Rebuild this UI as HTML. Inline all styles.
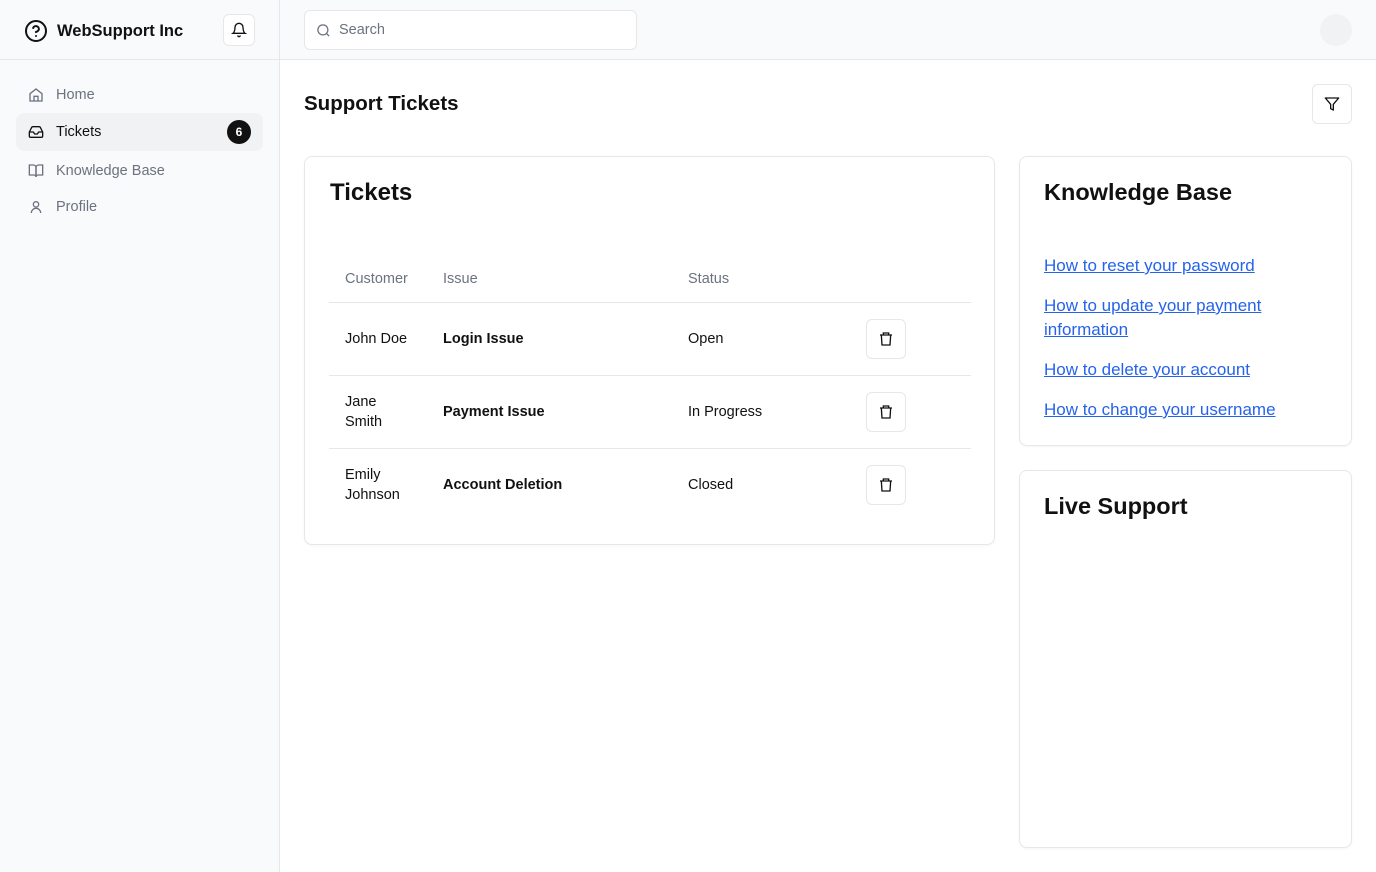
<!DOCTYPE html>
<html><head><style>
*{box-sizing:border-box;margin:0;padding:0}
body{width:1376px;height:872px;font-family:"Liberation Sans",sans-serif;background:#fff;color:#111;position:relative;overflow:hidden}
.side{position:absolute;left:0;top:0;width:280px;height:872px;background:#f9fafb;border-right:1px solid #e5e7eb}
.top{position:absolute;left:280px;top:0;right:0;height:60px;background:#f9fafb;border-bottom:1px solid #e5e7eb}
.sh{height:60px;border-bottom:1px solid #e5e7eb;position:relative}
.logo{position:absolute;left:24px;top:19px;display:flex;align-items:center;gap:9px;font-weight:bold;font-size:16.5px}
.bell{position:absolute;left:223px;top:14px;width:32px;height:32px;border:1px solid #e5e7eb;border-radius:6px;background:#fff;display:flex;align-items:center;justify-content:center}
.nav{position:absolute;left:16px;width:247px;height:38px;display:flex;align-items:center;padding-left:12px;gap:12px;font-size:14.5px;color:#6b7280;border-radius:8px}
.nav.act{background:#f1f2f4;color:#111}
.badge{position:absolute;right:12px;top:7px;width:24px;height:24px;border-radius:50%;background:#111;color:#fff;font-size:12px;font-weight:bold;display:flex;align-items:center;justify-content:center}
.search{position:absolute;left:24px;top:10px;width:333px;height:40px;border:1px solid #e5e7eb;border-radius:6px;background:#fff;display:flex;align-items:center;padding-left:11px;gap:8px;color:#6b7280;font-size:14.5px}
.avatar{position:absolute;right:24px;top:14px;width:32px;height:32px;border-radius:50%;background:#f1f2f4}
.card{position:absolute;border:1px solid #e5e7eb;border-radius:8px;background:#fff;box-shadow:0 1px 2px rgba(0,0,0,.04)}
h2{font-size:24px;font-weight:bold;position:absolute;left:25px;top:22px}
table{position:absolute;left:24px;top:100px;width:642px;border-collapse:collapse;font-size:14.5px}
th{text-align:left;font-weight:normal;color:#6b7280;height:45px;padding-left:16px;border-bottom:1px solid #e5e7eb}
td{height:73px;padding-left:16px;border-bottom:1px solid #e5e7eb;line-height:20px}
tr:last-child td{border-bottom:none}
.tb{width:40px;height:40px;border:1px solid #e5e7eb;border-radius:6px;display:flex;align-items:center;justify-content:center}
a{color:#2563eb;text-decoration:underline;font-size:17px;position:absolute;left:24px;line-height:24px}
</style></head><body>
<div class="side">
<div class="sh">
<div class="logo"><svg width="24" height="24" viewBox="0 0 24 24" fill="none" stroke="#111" stroke-width="2" stroke-linecap="round"><circle cx="12" cy="12" r="10"/><path d="M9.1 9a3 3 0 0 1 5.8 1c0 2-3 3-3 3"/><path d="M12 17h.01"/></svg>WebSupport Inc</div>
<div class="bell"><svg width="16" height="16" viewBox="0 0 24 24" fill="none" stroke="#111" stroke-width="2" stroke-linecap="round"><path d="M6 8a6 6 0 0 1 12 0c0 7 3 9 3 9H3s3-2 3-9"/><path d="M10.3 21a1.94 1.94 0 0 0 3.4 0"/></svg></div>
</div>
<div class="nav" style="top:76px"><svg width="16" height="16" viewBox="0 0 24 24" fill="none" stroke="#6b7280" stroke-width="2"><path d="M3 10l9-7 9 7v11H3z"/><path d="M9 21v-7h6v7"/></svg>Home</div>
<div class="nav act" style="top:113px"><svg width="16" height="16" viewBox="0 0 24 24" fill="none" stroke="#111" stroke-width="2"><path d="M22 12h-6l-2 3h-4l-2-3H2"/><path d="M5.5 5.1L2 12v6a2 2 0 0 0 2 2h16a2 2 0 0 0 2-2v-6l-3.5-6.9A2 2 0 0 0 16.8 4H7.2a2 2 0 0 0-1.7 1.1z"/></svg>Tickets<div class="badge">6</div></div>
<div class="nav" style="top:152px"><svg width="16" height="16" viewBox="0 0 24 24" fill="none" stroke="#6b7280" stroke-width="2"><path d="M2 3h6a4 4 0 0 1 4 4v14a3 3 0 0 0-3-3H2z"/><path d="M22 3h-6a4 4 0 0 0-4 4v14a3 3 0 0 1 3-3h7z"/></svg>Knowledge Base</div>
<div class="nav" style="top:188px"><svg width="16" height="16" viewBox="0 0 24 24" fill="none" stroke="#6b7280" stroke-width="2"><circle cx="12" cy="8" r="4"/><path d="M5 21a7 7 0 0 1 14 0"/></svg>Profile</div>
</div>
<div class="top">
<div class="search"><svg width="15" height="15" viewBox="0 0 24 24" fill="none" stroke="#6b7280" stroke-width="2"><circle cx="11" cy="11" r="8"/><path d="M21 21l-4.3-4.3"/></svg>Search</div>
<div class="avatar"></div>
</div>
<div style="position:absolute;left:304px;top:92px;font-size:20.5px;font-weight:bold">Support Tickets</div>
<div style="position:absolute;left:1312px;top:84px;width:40px;height:40px;border:1px solid #e5e7eb;border-radius:6px;display:flex;align-items:center;justify-content:center"><svg width="16" height="16" viewBox="0 0 24 24" fill="none" stroke="#111" stroke-width="2" stroke-linejoin="round"><path d="M22 3H2l8 9.5V19l4 2v-8.5z"/></svg></div>
<div class="card" style="left:304px;top:156px;width:691px;height:389px">
<h2>Tickets</h2>
<table>
<tr><th style="width:98px">Customer</th><th style="width:245px">Issue</th><th style="width:178px">Status</th><th></th></tr>
<tr><td>John Doe</td><td style="font-weight:bold">Login Issue</td><td>Open</td><td><div class="tb"><svg width="16" height="16" viewBox="0 0 24 24" fill="none" stroke="#111" stroke-width="2"><path d="M3 6h18M8 6V3h8v3M5 6l1 15h12l1-15"/></svg></div></td></tr>
<tr><td>Jane<br>Smith</td><td style="font-weight:bold">Payment Issue</td><td>In Progress</td><td><div class="tb"><svg width="16" height="16" viewBox="0 0 24 24" fill="none" stroke="#111" stroke-width="2"><path d="M3 6h18M8 6V3h8v3M5 6l1 15h12l1-15"/></svg></div></td></tr>
<tr><td>Emily<br>Johnson</td><td style="font-weight:bold">Account Deletion</td><td>Closed</td><td><div class="tb"><svg width="16" height="16" viewBox="0 0 24 24" fill="none" stroke="#111" stroke-width="2"><path d="M3 6h18M8 6V3h8v3M5 6l1 15h12l1-15"/></svg></div></td></tr>
</table>
</div>
<div class="card" style="left:1019px;top:156px;width:333px;height:290px">
<h2 style="left:24px;font-size:23.5px">Knowledge Base</h2>
<a style="top:97px">How to reset your password</a>
<a style="top:137px">How to update your payment<br>information</a>
<a style="top:201px">How to delete your account</a>
<a style="top:241px">How to change your username</a>
</div>
<div class="card" style="left:1019px;top:470px;width:333px;height:378px">
<h2 style="left:24px;font-size:23.5px">Live Support</h2>
</div>
</body></html>
